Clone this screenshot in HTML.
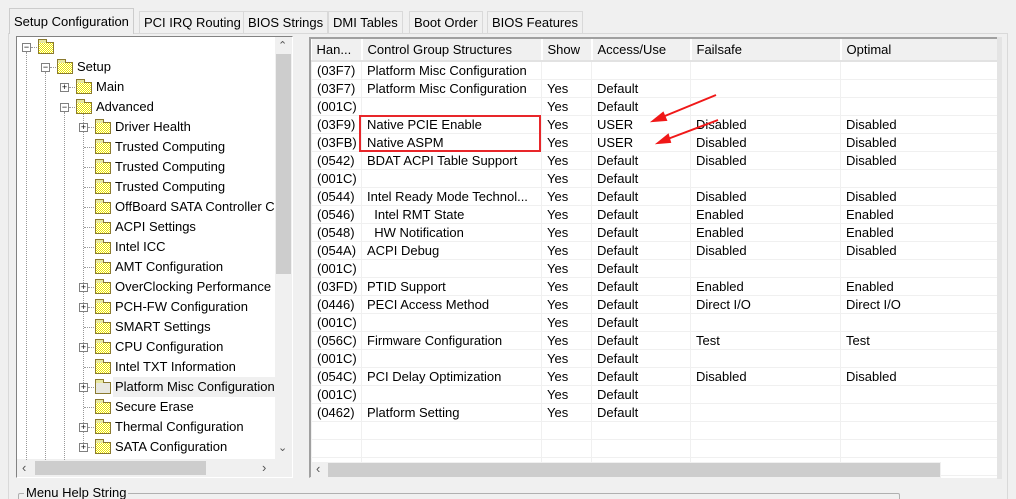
<!DOCTYPE html>
<html><head><meta charset="utf-8"><style>
*{margin:0;padding:0;box-sizing:border-box}
html,body{width:1016px;height:499px;overflow:hidden}
body{background:#f0f0f0;font-family:"Liberation Sans",Arial,sans-serif;font-size:13px;color:#000;position:relative}
.a{position:absolute}
.tab{position:absolute;top:11px;height:22px;border:1px solid #d9d9d9;border-bottom:none;background:#f0f0f0;padding:3px 4px 0 4px;font-size:13px;white-space:nowrap}
.r{position:absolute;height:18px;line-height:18px;white-space:nowrap}
.exp{position:absolute;width:9px;height:9px;border:1px solid #808080;background:#fff;font-size:9px;line-height:7px;text-align:center;color:#000}
.fold{position:absolute;width:16px;height:12px;border:1px solid #8a7a30;background:repeating-conic-gradient(#eee800 0 25%,#fffff0 0 50%) 0 0/2px 2px}
.fold:before{content:"";position:absolute;left:-1px;top:-4px;width:7px;height:3px;border:1px solid #8a7a30;border-bottom:none;background:#e8e8a0}
.vd{position:absolute;width:1px;border-left:1px dotted #999}
.hd{position:absolute;height:1px;border-top:1px dotted #999}
table{border-collapse:collapse;font-size:13px}
td{height:18px;border:1px solid #f0f0f0;padding:0 0 0 5px;white-space:nowrap;line-height:17px}
th{height:22px;font-weight:normal;text-align:left;padding:0 0 0 5px;background:#f0f0f0;border-right:2px solid #fff;border-bottom:2px solid #e2e2e2;border-left:1px solid #ccc}
</style></head><body>
<div class="tab" style="left:9px;top:8px;height:26px;background:#f0f0f0;padding-top:5px;z-index:2;border-color:#ccc">Setup Configuration</div>
<div class="tab" style="left:139px">PCI IRQ Routing</div>
<div class="tab" style="left:243px">BIOS Strings</div>
<div class="tab" style="left:328px">DMI Tables</div>
<div class="tab" style="left:409px">Boot Order</div>
<div class="tab" style="left:487px">BIOS Features</div>
<div class="a" style="left:8px;top:33px;width:1000px;height:470px;border:1px solid #d9d9d9;background:#f0f0f0"></div>

<!-- tree panel -->
<div class="a" style="left:16px;top:36px;width:277px;height:442px;border:1px solid #828282;border-right-color:#fff;border-bottom-color:#fff;background:#fff"></div>
<div class="a" style="left:275px;top:37px;width:17px;height:422px;background:#f0f0f0"></div>
<div class="a" style="left:276px;top:54px;width:15px;height:220px;background:#cdcdcd"></div>
<div class="a" style="left:278px;top:39px;font-size:11px;color:#555">&#8963;</div>
<div class="a" style="left:278px;top:441px;font-size:11px;color:#555">&#8964;</div>
<div class="a" style="left:17px;top:459px;width:275px;height:18px;background:#f0f0f0"></div>
<div class="a" style="left:35px;top:461px;width:171px;height:14px;background:#cdcdcd"></div>
<div class="a" style="left:22px;top:460px;font-size:13px;color:#555">&#8249;</div>
<div class="a" style="left:262px;top:460px;font-size:13px;color:#555">&#8250;</div>

<div class="vd" style="left:26px;top:52px;height:408px"></div>
<div class="vd" style="left:45px;top:72px;height:388px"></div>
<div class="vd" style="left:64px;top:112px;height:348px"></div>
<div class="vd" style="left:83px;top:112px;height:339px"></div>
<div class="a" style="left:113px;top:377px;width:162px;height:20px;background:#f0f0f0"></div>

<div class="exp" style="left:22px;top:43px">&minus;</div><div class="hd" style="left:31px;top:47px;width:6px"></div><div class="fold" style="left:38px;top:42px"></div>
<div class="exp" style="left:41px;top:63px">&minus;</div><div class="hd" style="left:50px;top:67px;width:6px"></div><div class="fold" style="left:57px;top:62px"></div><div class="r" style="left:77px;top:58px">Setup</div>
<div class="exp" style="left:60px;top:83px">+</div><div class="hd" style="left:69px;top:87px;width:6px"></div><div class="fold" style="left:76px;top:82px"></div><div class="r" style="left:96px;top:78px">Main</div>
<div class="exp" style="left:60px;top:103px">&minus;</div><div class="hd" style="left:69px;top:107px;width:6px"></div><div class="fold" style="left:76px;top:102px"></div><div class="r" style="left:96px;top:98px">Advanced</div>

<div class="exp" style="left:79px;top:123px">+</div><div class="hd" style="left:88px;top:127px;width:6px"></div><div class="fold" style="left:95px;top:122px"></div><div class="r" style="left:115px;top:118px">Driver Health</div>
<div class="hd" style="left:84px;top:147px;width:10px"></div><div class="fold" style="left:95px;top:142px"></div><div class="r" style="left:115px;top:138px">Trusted Computing</div>
<div class="hd" style="left:84px;top:167px;width:10px"></div><div class="fold" style="left:95px;top:162px"></div><div class="r" style="left:115px;top:158px">Trusted Computing</div>
<div class="hd" style="left:84px;top:187px;width:10px"></div><div class="fold" style="left:95px;top:182px"></div><div class="r" style="left:115px;top:178px">Trusted Computing</div>
<div class="hd" style="left:84px;top:207px;width:10px"></div><div class="fold" style="left:95px;top:202px"></div><div class="r" style="left:115px;top:198px;width:160px;overflow:hidden">OffBoard SATA Controller C</div>
<div class="hd" style="left:84px;top:227px;width:10px"></div><div class="fold" style="left:95px;top:222px"></div><div class="r" style="left:115px;top:218px">ACPI Settings</div>
<div class="hd" style="left:84px;top:247px;width:10px"></div><div class="fold" style="left:95px;top:242px"></div><div class="r" style="left:115px;top:238px">Intel ICC</div>
<div class="hd" style="left:84px;top:267px;width:10px"></div><div class="fold" style="left:95px;top:262px"></div><div class="r" style="left:115px;top:258px">AMT Configuration</div>
<div class="exp" style="left:79px;top:283px">+</div><div class="hd" style="left:88px;top:287px;width:6px"></div><div class="fold" style="left:95px;top:282px"></div><div class="r" style="left:115px;top:278px">OverClocking Performance</div>
<div class="exp" style="left:79px;top:303px">+</div><div class="hd" style="left:88px;top:307px;width:6px"></div><div class="fold" style="left:95px;top:302px"></div><div class="r" style="left:115px;top:298px">PCH-FW Configuration</div>
<div class="hd" style="left:84px;top:327px;width:10px"></div><div class="fold" style="left:95px;top:322px"></div><div class="r" style="left:115px;top:318px">SMART Settings</div>
<div class="exp" style="left:79px;top:343px">+</div><div class="hd" style="left:88px;top:347px;width:6px"></div><div class="fold" style="left:95px;top:342px"></div><div class="r" style="left:115px;top:338px">CPU Configuration</div>
<div class="hd" style="left:84px;top:367px;width:10px"></div><div class="fold" style="left:95px;top:362px"></div><div class="r" style="left:115px;top:358px">Intel TXT Information</div>
<div class="exp" style="left:79px;top:383px">+</div><div class="hd" style="left:88px;top:387px;width:6px"></div><div class="fold" style="left:95px;top:382px;background:#e8e8e0"></div><div class="r" style="left:115px;top:378px;width:160px;overflow:hidden">Platform Misc Configuration</div>
<div class="hd" style="left:84px;top:407px;width:10px"></div><div class="fold" style="left:95px;top:402px"></div><div class="r" style="left:115px;top:398px">Secure Erase</div>
<div class="exp" style="left:79px;top:423px">+</div><div class="hd" style="left:88px;top:427px;width:6px"></div><div class="fold" style="left:95px;top:422px"></div><div class="r" style="left:115px;top:418px">Thermal Configuration</div>
<div class="exp" style="left:79px;top:443px">+</div><div class="hd" style="left:88px;top:447px;width:6px"></div><div class="fold" style="left:95px;top:442px"></div><div class="r" style="left:115px;top:438px">SATA Configuration</div>

<!-- table panel -->
<div class="a" style="left:309px;top:37px;width:689px;height:441px;border:2px solid #a0a0a0;border-right:1px solid #fff;border-bottom:1px solid #fff;background:#fff;overflow:hidden">
<table style="width:686px;table-layout:fixed">
<colgroup><col style="width:50px"><col style="width:180px"><col style="width:50px"><col style="width:99px"><col style="width:150px"><col style="width:157px"></colgroup>
<tr><th style="border-left:none">Han...</th><th>Control Group Structures</th><th>Show</th><th>Access/Use</th><th>Failsafe</th><th>Optimal</th></tr>
<tr><td>(03F7)</td><td>Platform Misc Configuration</td><td></td><td></td><td></td><td></td></tr>
<tr><td>(03F7)</td><td>Platform Misc Configuration</td><td>Yes</td><td>Default</td><td></td><td></td></tr>
<tr><td>(001C)</td><td></td><td>Yes</td><td>Default</td><td></td><td></td></tr>
<tr><td>(03F9)</td><td>Native PCIE Enable</td><td>Yes</td><td>USER</td><td>Disabled</td><td>Disabled</td></tr>
<tr><td>(03FB)</td><td>Native ASPM</td><td>Yes</td><td>USER</td><td>Disabled</td><td>Disabled</td></tr>
<tr><td>(0542)</td><td>BDAT ACPI Table Support</td><td>Yes</td><td>Default</td><td>Disabled</td><td>Disabled</td></tr>
<tr><td>(001C)</td><td></td><td>Yes</td><td>Default</td><td></td><td></td></tr>
<tr><td>(0544)</td><td>Intel Ready Mode Technol...</td><td>Yes</td><td>Default</td><td>Disabled</td><td>Disabled</td></tr>
<tr><td>(0546)</td><td>&nbsp;&nbsp;Intel RMT State</td><td>Yes</td><td>Default</td><td>Enabled</td><td>Enabled</td></tr>
<tr><td>(0548)</td><td>&nbsp;&nbsp;HW Notification</td><td>Yes</td><td>Default</td><td>Enabled</td><td>Enabled</td></tr>
<tr><td>(054A)</td><td>ACPI Debug</td><td>Yes</td><td>Default</td><td>Disabled</td><td>Disabled</td></tr>
<tr><td>(001C)</td><td></td><td>Yes</td><td>Default</td><td></td><td></td></tr>
<tr><td>(03FD)</td><td>PTID Support</td><td>Yes</td><td>Default</td><td>Enabled</td><td>Enabled</td></tr>
<tr><td>(0446)</td><td>PECI Access Method</td><td>Yes</td><td>Default</td><td>Direct I/O</td><td>Direct I/O</td></tr>
<tr><td>(001C)</td><td></td><td>Yes</td><td>Default</td><td></td><td></td></tr>
<tr><td>(056C)</td><td>Firmware Configuration</td><td>Yes</td><td>Default</td><td>Test</td><td>Test</td></tr>
<tr><td>(001C)</td><td></td><td>Yes</td><td>Default</td><td></td><td></td></tr>
<tr><td>(054C)</td><td>PCI Delay Optimization</td><td>Yes</td><td>Default</td><td>Disabled</td><td>Disabled</td></tr>
<tr><td>(001C)</td><td></td><td>Yes</td><td>Default</td><td></td><td></td></tr>
<tr><td>(0462)</td><td>Platform Setting</td><td>Yes</td><td>Default</td><td></td><td></td></tr>
<tr><td></td><td></td><td></td><td></td><td></td><td></td></tr>
<tr><td></td><td></td><td></td><td></td><td></td><td></td></tr>
<tr><td></td><td></td><td></td><td></td><td></td><td></td></tr>
</table>
</div>
<div class="a" style="left:311px;top:462px;width:630px;height:16px;background:#f0f0f0"></div>
<div class="a" style="left:328px;top:463px;width:612px;height:14px;background:#cdcdcd"></div>
<div class="a" style="left:316px;top:461px;font-size:13px;color:#555">&#8249;</div>
<div class="a" style="left:997px;top:37px;width:5px;height:442px;background:#e4e4e4"></div>

<!-- red box and arrows -->
<div class="a" style="left:359px;top:115px;width:182px;height:37px;border:2px solid #e8262a"></div>
<svg class="a" style="left:640px;top:90px" width="90" height="70"><g stroke="#f01818" stroke-width="2" fill="#f01818">
<line x1="76" y1="5" x2="20" y2="28"/><polygon points="13,31 23,23 26,30"/>
<line x1="78" y1="30" x2="25" y2="50"/><polygon points="18,53 28,45 30,52"/></g></svg>

<!-- help group -->
<div class="a" style="left:18px;top:493px;width:882px;height:20px;border:1px solid #b0b0b0;border-radius:2px"></div>
<div class="a" style="left:24px;top:485px;background:#f0f0f0;padding:0 2px;font-size:13px">Menu Help String</div>
</body></html>
